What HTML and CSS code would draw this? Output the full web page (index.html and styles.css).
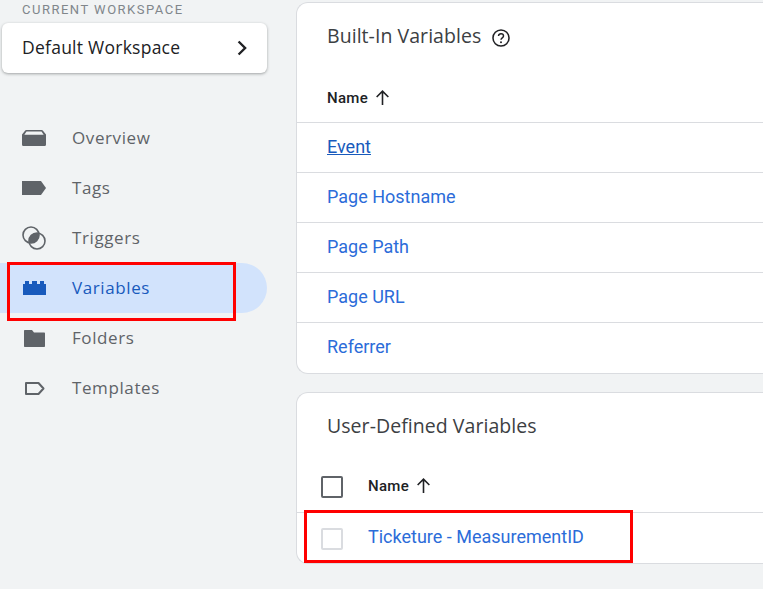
FILE: index.html
```html
<!DOCTYPE html>
<html lang="en">
<head>
    <meta charset="UTF-8">
    <title>Variables</title>
    <link rel="stylesheet" href="styles.css">
</head>
<body>
    <div class="page">
        <!-- Sidebar -->
        <aside class="sidebar">
            <div class="ws-label">CURRENT WORKSPACE</div>
            <div class="ws-card">
                <span>Default Workspace</span>
                <svg width="24" height="24" viewBox="0 0 24 24"><path d="M8.600 5.500 15.100 12l-6.500 6.500" fill="none" stroke="#202124" stroke-width="2.400"/></svg>
            </div>
            <nav class="nav">
                <a class="nav-item">
                    <svg class="nav-icon" width="24" height="24" viewBox="0 0 24 24"><path d="M0 8.500 3 4.700C3.300 4.300 3.700 4 4.400 4h15.200c.7 0 1.100.3 1.400.7l3 3.800v10c0 1-.8 1.500-1.700 1.500H1.700C.8 20 0 19.500 0 18.500z" fill="#5f6368"/><path d="M2.300 8.700 4.500 5.600h15l2.200 3.100z" fill="#f1f3f4"/></svg>
                    <span>Overview</span>
                </a>
                <a class="nav-item">
                    <svg class="nav-icon" width="24" height="24" viewBox="0 0 24 24"><path d="M0 5h19l5 7-5 7H0z" fill="#5f6368"/></svg>
                    <span>Tags</span>
                </a>
                <a class="nav-item">
                    <svg class="nav-icon" width="24" height="24" viewBox="0 0 24 24"><circle cx="9" cy="9" r="8" fill="none" stroke="#5f6368" stroke-width="1.600"/><circle cx="15" cy="15" r="8" fill="none" stroke="#5f6368" stroke-width="1.600"/><path d="M16.800 7.200A8 8 0 0 0 7.200 16.800 8 8 0 0 0 16.800 7.200z" fill="#5f6368"/></svg>
                    <span>Triggers</span>
                </a>
                <a class="nav-item active">
                    <svg class="nav-icon" width="24" height="24" viewBox="0 0 24 24"><path d="M1 8h2V5h4v3h3V5h5v3h3V5h4v3h2v11H1z" fill="#185abc"/></svg>
                    <span>Variables</span>
                </a>
                <a class="nav-item">
                    <svg class="nav-icon" width="24" height="24" viewBox="0 0 24 24"><path d="M3 4h7l2 2.500h10c.6 0 1 .4 1 1V20c0 .6-.4 1-1 1H3c-.6 0-1-.4-1-1V5c0-.6.4-1 1-1z" fill="#5f6368"/></svg>
                    <span>Folders</span>
                </a>
                <a class="nav-item">
                    <svg class="nav-icon" width="24" height="24" viewBox="0 0 24 24"><path d="M4 7h12.500l5 5.500-5 5.500H4z" fill="none" stroke="#5f6368" stroke-width="2" stroke-linejoin="round"/></svg>
                    <span>Templates</span>
                </a>
            </nav>
            <div class="mark mark-nav"></div>
        </aside>

        <!-- Tables -->
        <main class="content">
            <section class="card card-builtin">
                <div class="card-title">
                    Built-In Variables
                    <svg class="help" width="22" height="22" viewBox="0 0 20 20"><circle cx="10" cy="10" r="7.300" fill="none" stroke="#202124" stroke-width="1.400"/><path d="M7.700 8.200A2.300 2.300 0 0 1 10 6.200c1.300 0 2.300.9 2.300 2 0 1.700-2.300 1.700-2.300 3.400" fill="none" stroke="#202124" stroke-width="1.300"/><circle cx="10" cy="13.800" r=".9" fill="#202124"/></svg>
                </div>
                <div class="head-row">
                    <span>Name</span>
                    <svg width="17" height="17" viewBox="0 0 16 16"><path d="M8 15V2M2.500 7.500 8 2l5.500 5.500" fill="none" stroke="#202124" stroke-width="1.500"/></svg>
                </div>
                <div class="row"><a class="link hover">Event</a></div>
                <div class="row"><a class="link">Page Hostname</a></div>
                <div class="row"><a class="link">Page Path</a></div>
                <div class="row"><a class="link">Page URL</a></div>
                <div class="row"><a class="link">Referrer</a></div>
            </section>

            <section class="card card-user">
                <div class="card-title">User-Defined Variables</div>
                <div class="head-row check-row">
                    <span class="check"></span>
                    <span>Name</span>
                    <svg width="17" height="17" viewBox="0 0 16 16"><path d="M8 15V2M2.500 7.500 8 2l5.500 5.500" fill="none" stroke="#202124" stroke-width="1.500"/></svg>
                </div>
                <div class="row check-row">
                    <span class="check check-light"></span>
                    <a class="link">Ticketure - MeasurementID</a>
                </div>
            </section>
            <div class="mark mark-row"></div>
        </main>
    </div>
</body>
</html>
```

FILE: styles.css
```css
html, body {
    margin: 0;
    height: 100%;
    overflow: hidden;
}

body {
    background-color: #f1f3f4;
    font-family: Roboto, Arial, sans-serif;
    color: #202124;
}

.page {
    display: flex;
    gap: 29px;
    width: 800px;
}

/* Sidebar */
.sidebar {
    position: relative;
    width: 267px;
    flex-shrink: 0;
    padding-top: 1px;
}

.ws-label {
    padding-left: 22px;
    height: 22px;
    font-size: 13px;
    line-height: 17px;
    letter-spacing: 1.500px;
    color: #80868b;
}

.ws-card {
    display: flex;
    align-items: center;
    justify-content: space-between;
    height: 50px;
    margin-left: 2px;
    padding: 0 13px 0 20px;
    background-color: #ffffff;
    border-radius: 6px;
    box-shadow: 0 1px 3px rgba(60, 64, 67, 0.45);
    font-family: "Open Sans", Roboto, sans-serif;
    font-size: 17.500px;
    letter-spacing: 0.250px;
    color: #202124;
}

.ws-card span {
    margin-top: -2px;
}

.nav {
    margin-top: 40px;
}

.nav-item {
    display: flex;
    align-items: center;
    height: 50px;
    padding-left: 22px;
    font-family: "Open Sans", Roboto, sans-serif;
    font-size: 17px;
    font-weight: 500;
    letter-spacing: 0.600px;
    color: #5f6368;
}

.nav-item span {
    margin-top: -2px;
}

.nav-icon {
    margin-right: 26px;
    flex-shrink: 0;
}

.nav-item.active {
    background-color: #d2e3fc;
    color: #185abc;
    border-radius: 0 25px 25px 0;
}

/* Red marks from the annotated screenshot */
.mark {
    position: absolute;
    box-sizing: border-box;
    border: 3px solid #ff0000;
}

.mark-nav {
    left: 7px;
    top: 262px;
    width: 229px;
    height: 59px;
}

.mark-row {
    left: 8px;
    top: 510px;
    width: 329px;
    height: 53px;
}

/* Cards */
.content {
    position: relative;
    flex: 1;
    padding-top: 2px;
}

.card {
    background-color: #ffffff;
    border: 1px solid #dadce0;
    border-right: none;
    border-radius: 12px 0 0 12px;
}

.card-user {
    margin-top: 18px;
}

.card-title {
    display: flex;
    align-items: center;
    gap: 9px;
    box-sizing: border-box;
    height: 70px;
    padding: 0 0 5px 30px;
    font-family: "Open Sans", Roboto, sans-serif;
    font-size: 19.500px;
    letter-spacing: 0.050px;
    color: #3c4043;
}

.help {
    margin-top: 4px;
}

.card-user .card-title {
    height: 66px;
    padding-bottom: 2px;
}

.head-row {
    display: flex;
    align-items: center;
    gap: 6px;
    height: 50px;
    padding-left: 30px;
    font-size: 15px;
    letter-spacing: 0.300px;
    font-weight: 500;
    color: #202124;
    border-bottom: 1px solid #dadce0;
    box-sizing: border-box;
}

.row {
    display: flex;
    align-items: center;
    height: 50px;
    padding-left: 30px;
    font-size: 18px;
    border-bottom: 1px solid #dadce0;
    box-sizing: border-box;
}

.row:last-child {
    border-bottom-color: transparent;
}

.link {
    margin-top: -2px;
    color: #2b6cd9;
}

.link.hover {
    color: #185abc;
    text-decoration: underline;
}

.check-row {
    gap: 6px;
    padding-left: 24px;
}

.card-user .head-row {
    height: 54px;
}

.check {
    width: 22px;
    height: 22px;
    box-sizing: border-box;
    border: 2px solid #5f6368;
    border-radius: 2px;
    margin: 2px 19px 0 0;
}

.check-light {
    border-color: #dadce0;
}
```
